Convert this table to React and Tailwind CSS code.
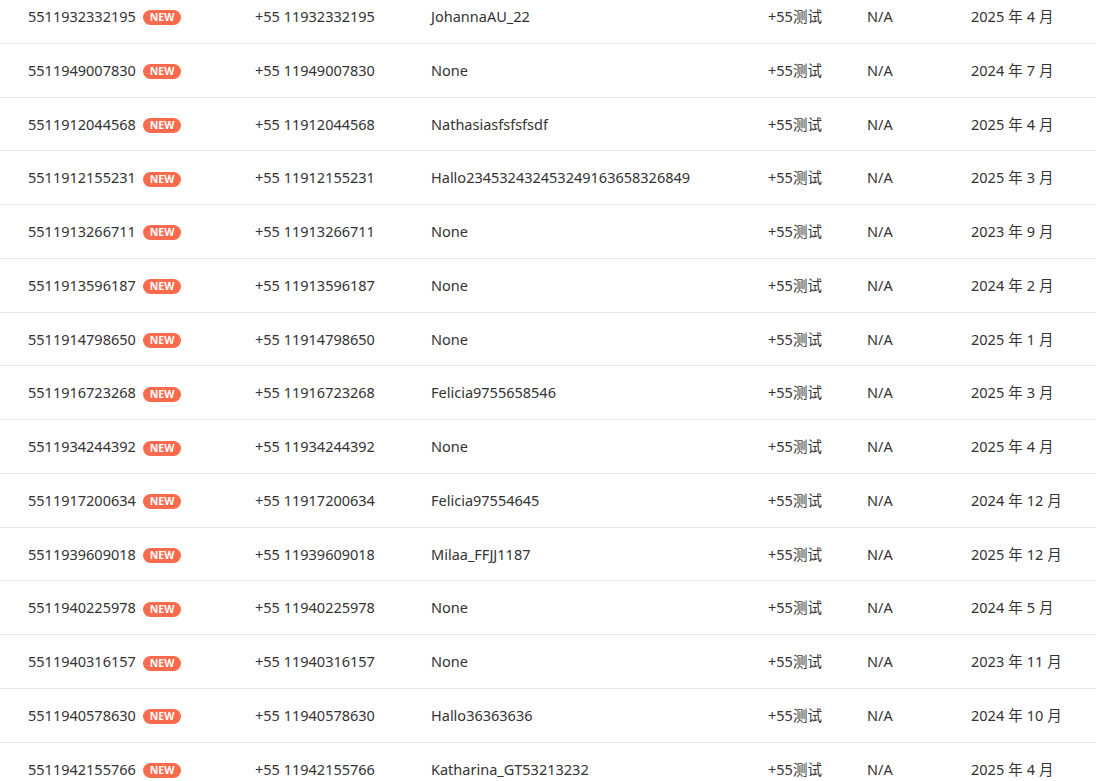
const rows = [
  ["5511932332195", "JohannaAU_22", "2025 年 4 月"],
  ["5511949007830", "None", "2024 年 7 月"],
  ["5511912044568", "Nathasiasfsfsfsdf", "2025 年 4 月"],
  ["5511912155231", "Hallo234532432453249163658326849", "2025 年 3 月"],
  ["5511913266711", "None", "2023 年 9 月"],
  ["5511913596187", "None", "2024 年 2 月"],
  ["5511914798650", "None", "2025 年 1 月"],
  ["5511916723268", "Felicia9755658546", "2025 年 3 月"],
  ["5511934244392", "None", "2025 年 4 月"],
  ["5511917200634", "Felicia97554645", "2024 年 12 月"],
  ["5511939609018", "Milaa_FFJJ1187", "2025 年 12 月"],
  ["5511940225978", "None", "2024 年 5 月"],
  ["5511940316157", "None", "2023 年 11 月"],
  ["5511940578630", "Hallo36363636", "2024 年 10 月"],
  ["5511942155766", "Katharina_GT53213232", "2025 年 4 月"],
];

export default function App() {
  return (
    <div
      className="h-[781px] overflow-hidden bg-white text-[14.5px] text-[#333]"
      style={{ fontFamily: '"Noto Sans", "Noto Sans CJK SC", sans-serif' }}
    >
      <div className="-mt-[10px]">
        {rows.map(([id, name, date]) => (
          <div
            key={id}
            className="grid h-[53.77px] grid-cols-[227px_176px_337px_99px_104px_1fr] items-center border-b border-[#e5e5e5] pl-[28px] pt-[1px]"
          >
            <div className="flex items-center gap-[7px]">
              <span>{id}</span>
              <span className="mt-[2px] rounded-full bg-[#fa6a4c] px-[7px] text-[10.5px] font-bold leading-[15px] text-white">
                NEW
              </span>
            </div>
            <div>+55 {id.slice(2)}</div>
            <div>{name}</div>
            <div>+55测试</div>
            <div>N/A</div>
            <div className="flex gap-[4px]">
              {date.split(" ").map((p, i) => (
                <span key={i}>{p}</span>
              ))}
            </div>
          </div>
        ))}
      </div>
    </div>
  );
}
